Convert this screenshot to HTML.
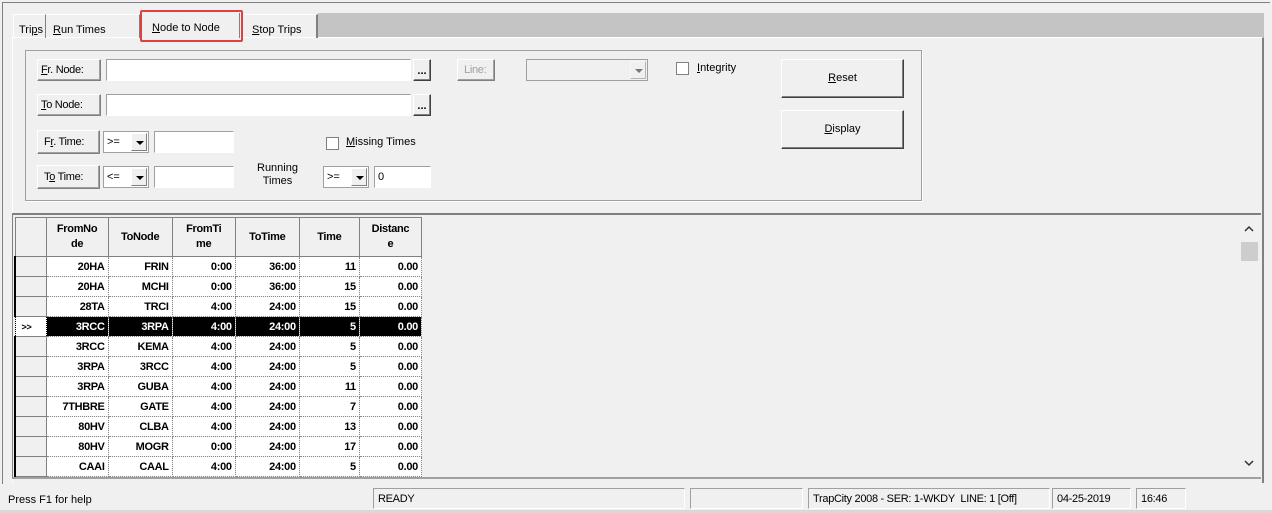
<!DOCTYPE html><html><head><style>
*{box-sizing:border-box}
body{margin:0;width:1272px;height:513px;background:#f0f0f0;font-family:"Liberation Sans",sans-serif;font-size:11px;color:#000;position:relative;overflow:hidden}
.a{position:absolute;white-space:nowrap}
.sunk{border:1px solid;border-color:#a0a0a0 #fff #fff #a0a0a0;background:#fff}
.lbl{border:1px solid;border-color:#fff #808080 #808080 #fff;box-shadow:inset -1px -1px #a0a0a0;background:#f0f0f0;padding:4px 0 0 3px;font-size:11px;letter-spacing:-0.3px}
.btn{border:1px solid;border-color:#fff #404040 #404040 #fff;box-shadow:inset -1px -1px #808080;background:#f0f0f0;text-align:center}
.dd{border:1px solid #a0a0a0;background:#fff}
.arr{position:absolute;right:1px;top:1px;bottom:1px;width:16px;background:#f0f0f0;border:1px solid;border-color:#fff #808080 #808080 #fff}
.arr:after{content:"";position:absolute;left:4px;top:7px;border-left:4px solid transparent;border-right:4px solid transparent;border-top:4px solid #000}
.cb{width:13px;height:13px;border:1px solid #808080;background:#fff}
u{text-decoration:underline}
table{border-collapse:collapse;table-layout:fixed;width:408px;font-size:11px;font-weight:bold;letter-spacing:-0.3px}
td{height:20px;padding:0 3px 0 0;text-align:right;border-right:1px dotted #888;border-bottom:1px dotted #888;background:#fff;overflow:hidden;white-space:nowrap}
th{border:1px solid #808080;background:#f0f0f0;font-size:11px;line-height:15px;padding:0;height:39px;overflow:hidden}
td.rh{background:#f0f0f0;border:1px solid #808080;border-left:2px solid #000;text-align:left;padding-left:6px;font-size:9px}
tr.sel td{background:#000;color:#fff}
tr.sel td.rh{background:#fff;color:#000;border:1px dotted #000}
.st{top:488px;height:21px;border:1px solid;border-color:#a0a0a0 #fff #fff #a0a0a0;padding:4px 4px 0;font-size:11px;letter-spacing:-0.3px;overflow:hidden}
</style></head><body>
<div class="a" style="left:2px;top:2px;width:1268px;height:482px;border-top:1px solid #808080;border-left:1px solid #808080"></div>
<div class="a" style="left:318px;top:13px;width:946px;height:25px;background:#c4c4c4"></div>
<div class="a" style="left:12px;top:37px;width:1252px;height:446px;border-left:1px solid #fff;border-top:1px solid #fff;border-right:2px solid #808080"></div>
<div class="a" style="left:13px;top:14px;width:33px;height:24px;border:1px solid #fff;border-right:1px solid #808080;border-bottom:none;padding:9px 0 0 5px">Tri<u>p</u>s</div>
<div class="a" style="left:46px;top:14px;width:94px;height:24px;border-top:1px solid #fff;border-right:1px solid #808080;padding:9px 0 0 7px"><u>R</u>un Times</div>
<div class="a" style="left:140px;top:10px;width:103px;height:32px;border:2px solid #e04040;border-radius:2px"></div>
<div class="a" style="left:143px;top:13px;width:97px;height:25px;background:#f0f0f0;padding:9px 0 0 9px;border-right:1px solid #808080"><u>N</u>ode to Node</div>
<div class="a" style="left:244px;top:14px;width:74px;height:24px;border-top:1px solid #fff;border-right:2px solid #808080;padding:9px 0 0 8px"><u>S</u>top Trips</div>
<div class="a" style="left:25px;top:50px;width:897px;height:151px;border:1px solid #a0a0a0;box-shadow:1px 1px #fff"></div>
<div class="a lbl" style="left:37px;top:59px;width:64px;height:22px"><u>F</u>r. Node:</div>
<div class="a sunk" style="left:106px;top:59px;width:305px;height:22px"></div>
<div class="a btn" style="left:413px;top:59px;width:18px;height:22px;font-weight:bold;line-height:22px">...</div>
<div class="a lbl" style="left:37px;top:94px;width:64px;height:22px"><u>T</u>o Node:</div>
<div class="a sunk" style="left:106px;top:94px;width:305px;height:22px"></div>
<div class="a btn" style="left:413px;top:94px;width:18px;height:22px;font-weight:bold;line-height:22px">...</div>
<div class="a lbl" style="left:37px;top:130px;width:63px;height:24px;padding-left:6px;padding-top:5px">F<u>r</u>. Time:</div>
<div class="a dd" style="left:103px;top:131px;width:46px;height:22px;padding:4px 3px">&gt;=<div class="arr"></div></div>
<div class="a sunk" style="left:154px;top:131px;width:80px;height:22px"></div>
<div class="a lbl" style="left:37px;top:165px;width:63px;height:24px;padding-left:6px;padding-top:5px">T<u>o</u> Time:</div>
<div class="a dd" style="left:103px;top:166px;width:46px;height:22px;padding:4px 3px">&lt;=<div class="arr"></div></div>
<div class="a sunk" style="left:154px;top:166px;width:80px;height:22px"></div>
<div class="a" style="left:257px;top:162px;line-height:13px;text-align:center">Running<br>Times</div>
<div class="a cb" style="left:326px;top:137px"></div>
<div class="a" style="left:346px;top:136px"><u>M</u>issing Times</div>
<div class="a dd" style="left:323px;top:166px;width:46px;height:22px;padding:4px 3px">&gt;=<div class="arr"></div></div>
<div class="a sunk" style="left:374px;top:166px;width:57px;height:22px;padding:4px 3px">0</div>
<div class="a lbl" style="left:457px;top:59px;width:38px;height:22px;color:#a0a0a0;padding-left:6px">Line:</div>
<div class="a" style="left:526px;top:59px;width:122px;height:22px;border:1px solid #a0a0a0"><div class="arr" style="opacity:.5"></div></div>
<div class="a cb" style="left:676px;top:62px"></div>
<div class="a" style="left:697px;top:62px"><u>I</u>ntegrity</div>
<div class="a btn" style="left:781px;top:59px;width:123px;height:39px;line-height:37px"><u>R</u>eset</div>
<div class="a btn" style="left:781px;top:110px;width:123px;height:39px;line-height:37px"><u>D</u>isplay</div>
<div class="a" style="left:12px;top:213px;width:1249px;height:266px;border-top:2px solid #808080;border-left:1px solid #808080;border-bottom:2px solid #a0a0a0;background:#f0f0f0;overflow:hidden">
<table class="a" style="left:1px;top:2px">
<colgroup><col style="width:31px"><col style="width:62px"><col style="width:64px"><col style="width:63px"><col style="width:64px"><col style="width:60px"><col style="width:62px"></colgroup>
<tr><th></th><th>FromNo<br>de</th><th>ToNode</th><th>FromTi<br>me</th><th>ToTime</th><th>Time</th><th>Distanc<br>e</th></tr>
<tr><td class="rh"></td><td>20HA</td><td>FRIN</td><td>0:00</td><td>36:00</td><td>11</td><td>0.00</td></tr>
<tr><td class="rh"></td><td>20HA</td><td>MCHI</td><td>0:00</td><td>36:00</td><td>15</td><td>0.00</td></tr>
<tr><td class="rh"></td><td>28TA</td><td>TRCI</td><td>4:00</td><td>24:00</td><td>15</td><td>0.00</td></tr>
<tr class="sel"><td class="rh">&gt;&gt;</td><td>3RCC</td><td>3RPA</td><td>4:00</td><td>24:00</td><td>5</td><td>0.00</td></tr>
<tr><td class="rh"></td><td>3RCC</td><td>KEMA</td><td>4:00</td><td>24:00</td><td>5</td><td>0.00</td></tr>
<tr><td class="rh"></td><td>3RPA</td><td>3RCC</td><td>4:00</td><td>24:00</td><td>5</td><td>0.00</td></tr>
<tr><td class="rh"></td><td>3RPA</td><td>GUBA</td><td>4:00</td><td>24:00</td><td>11</td><td>0.00</td></tr>
<tr><td class="rh"></td><td>7THBRE</td><td>GATE</td><td>4:00</td><td>24:00</td><td>7</td><td>0.00</td></tr>
<tr><td class="rh"></td><td>80HV</td><td>CLBA</td><td>4:00</td><td>24:00</td><td>13</td><td>0.00</td></tr>
<tr><td class="rh"></td><td>80HV</td><td>MOGR</td><td>0:00</td><td>24:00</td><td>17</td><td>0.00</td></tr>
<tr><td class="rh"></td><td>CAAI</td><td>CAAL</td><td>4:00</td><td>24:00</td><td>5</td><td>0.00</td></tr>
</table>
<div class="a" style="left:1227px;top:4px;width:20px;height:260px;background:#f0f0f0"></div>
<svg class="a" style="left:1230px;top:10px" width="12" height="8"><path d="M2 6 L6 2 L10 6" stroke="#333" stroke-width="1.5" fill="none"/></svg>
<div class="a" style="left:1228px;top:27px;width:17px;height:19px;background:#cdcdcd"></div>
<svg class="a" style="left:1230px;top:244px" width="12" height="8"><path d="M2 2 L6 6 L10 2" stroke="#333" stroke-width="1.5" fill="none"/></svg>
</div>
<div class="a" style="left:8px;top:494px">Press F1 for help</div>
<div class="a st" style="left:373px;width:312px">READY</div>
<div class="a st" style="left:690px;width:113px"></div>
<div class="a st" style="left:808px;width:242px">TrapCity 2008 - SER: 1-WKDY&nbsp; LINE: 1 [Off]</div>
<div class="a st" style="left:1052px;width:79px">04-25-2019</div>
<div class="a st" style="left:1136px;width:50px">16:46</div>
<div class="a" style="left:0;top:510px;width:1272px;height:3px;background:#d8d8d8"></div>
</body></html>
